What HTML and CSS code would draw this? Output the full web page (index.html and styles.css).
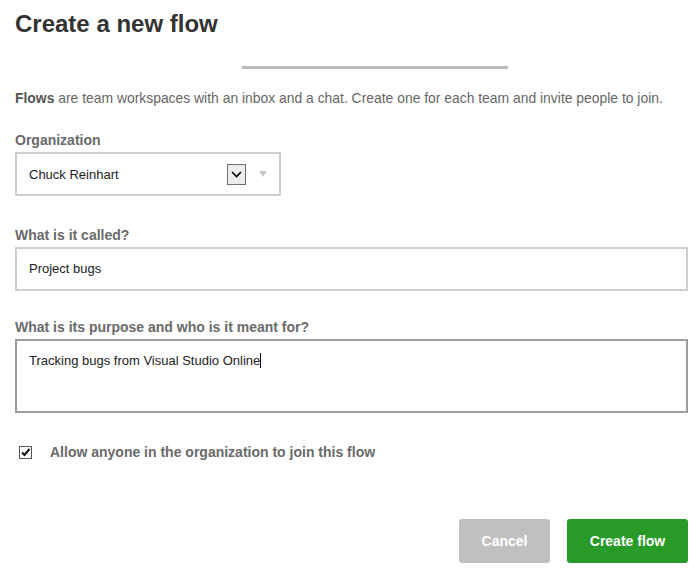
FILE: index.html
```html
<!DOCTYPE html>
<html>
<head>
<meta charset="utf-8">
<link rel="stylesheet" href="styles.css">
</head>
<body>
<div class="page">
  <h1 class="title">Create a new flow</h1>
  <div class="progress"></div>
  <p class="intro"><b>Flows</b> are team workspaces with an inbox and a chat. Create one for each team and invite people to join.</p>

  <div class="field">
    <div class="label">Organization</div>
    <div class="select">
      <span class="select-text">Chuck Reinhart</span>
      <span class="native-arrow">
        <svg width="11" height="7" viewBox="0 0 11 7"><path d="M1 1 L5.5 5.5 L10 1" fill="none" stroke="#000" stroke-width="1.6"/></svg>
      </span>
      <span class="tri"></span>
    </div>
  </div>

  <div class="field f2">
    <div class="label">What is it called?</div>
    <div class="input">Project bugs</div>
  </div>

  <div class="field f3">
    <div class="label">What is its purpose and who is it meant for?</div>
    <div class="textarea">Tracking bugs from Visual Studio Online<span class="caret"></span></div>
  </div>

  <div class="check-row">
    <span class="checkbox">
      <svg width="11" height="11" viewBox="0 0 11 11"><path d="M2 5.5 L4.5 8 L9.5 2" fill="none" stroke="#111" stroke-width="2"/></svg>
    </span>
    <span class="check-label">Allow anyone in the organization to join this flow</span>
  </div>

  <div class="actions">
    <button class="btn btn-cancel">Cancel</button>
    <button class="btn btn-create">Create flow</button>
  </div>
</div>
</body>
</html>
```

FILE: styles.css
```css
* { box-sizing: border-box; }
html, body { margin: 0; padding: 0; background: #fff; }
body { font-family: "Liberation Sans", Arial, sans-serif; color: #333; }
.page { padding: 10px 12px 0 15px; width: 700px; }
.title { margin: 0; font-size: 24px; line-height: 28px; font-weight: bold; color: #333; }
.progress { margin: 28px 0 0 227px; width: 266px; height: 3px; background: #bcbcbc; }
.intro { margin: 21px 0 0; font-size: 13.9px; line-height: 16px; color: #666; white-space: nowrap; }
.intro b { color: #555; }
.field { margin-top: 26px; }
.f2 { margin-top: 31px; }
.f3 { margin-top: 28px; }
.label { font-size: 14px; line-height: 16px; font-weight: bold; color: #6a6a6a; margin-bottom: 4px; }
.select { width: 266px; height: 44px; border: 2px solid #cfcfcf; display: flex; align-items: center; padding: 0 12px; font-size: 13px; color: #222; }
.select-text { flex: 1; }
.native-arrow { width: 19px; height: 21px; border: 1px solid #6f6f6f; background: #ededed; display: flex; align-items: center; justify-content: center; margin-top: 1px; }
.tri { width: 0; height: 0; border-left: 4px solid transparent; border-right: 4px solid transparent; border-top: 6px solid #c8c8c8; margin-left: 13px; }
.input { width: 673px; height: 44px; border: 2px solid #cfcfcf; padding: 12px; font-size: 13px; line-height: 16px; color: #222; }
.textarea { width: 673px; height: 74px; border: 2px solid #9e9e9e; padding: 12px; font-size: 13px; line-height: 16px; color: #222; }
.caret { display: inline-block; width: 1px; height: 15px; background: #000; vertical-align: -3px; }
.check-row { margin-top: 31px; display: flex; align-items: center; height: 16px; }
.checkbox { width: 13px; height: 13px; border: 1px solid #555; margin-left: 4px; display: flex; align-items: center; justify-content: center; background: #fff; }
.check-label { margin-left: 18px; font-size: 14px; line-height: 16px; font-weight: bold; color: #6a6a6a; }
.actions { margin-top: 59px; display: flex; justify-content: flex-end; gap: 17px; }
.btn { height: 44px; border: 0; border-radius: 3px; font-family: "Liberation Sans", Arial, sans-serif; font-size: 14px; font-weight: bold; color: #fff; padding: 0; }
.btn-cancel { width: 91px; background: #c0c0c0; }
.btn-create { width: 121px; background: #279a27; }
```
